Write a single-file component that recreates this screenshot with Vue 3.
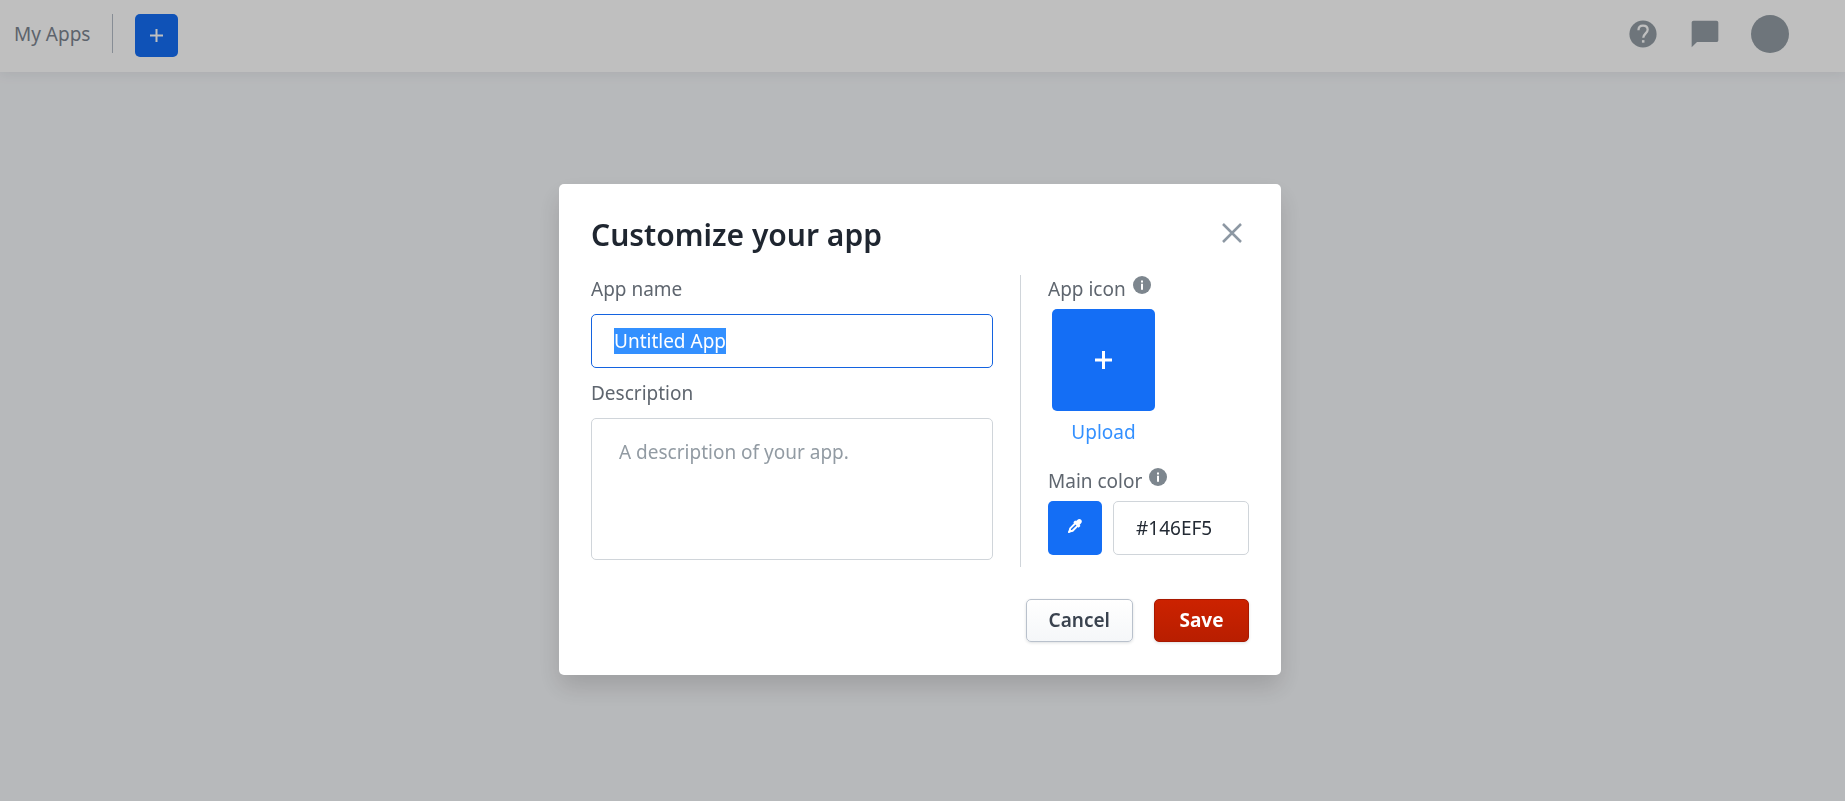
<script setup>
import { nextTick, onMounted, ref } from 'vue'

const appName = ref('Untitled App')
const description = ref('')
const mainColor = ref('#146EF5')
const nameInput = ref(null)

onMounted(async () => {
  await nextTick()
  nameInput.value.focus()
  nameInput.value.select()
})
</script>

<template>
  <div class="page">
    <header class="topbar">
      <a class="home" href="#">My Apps</a>
      <span class="rule"></span>
      <button class="add" type="button" aria-label="New app">
        <svg width="13" height="13" viewBox="0 0 13 13"><path d="M6.5 0v13M0 6.5h13" stroke="#fff" stroke-width="2" /></svg>
      </button>
      <nav class="tools">
        <button class="tool" type="button" aria-label="Help">
          <svg width="32" height="32" viewBox="0 0 24 24"><circle cx="12" cy="12" r="10.2" fill="currentColor" /><path d="M8.6 9.2C8.6 7 10 5.8 12 5.8s3.5 1.2 3.5 3.1c0 2.5-3.3 2.9-3.3 6" fill="none" stroke="#fff" stroke-width="1.7" /><path d="M11.2 16.6h1.9v1.9h-1.9z" fill="#fff" /></svg>
        </button>
        <button class="tool" type="button" aria-label="Messages">
          <svg width="32" height="32" viewBox="0 0 24 24" fill="currentColor"><path d="M20.6 2H3.4C2.6 2 2 2.6 2 3.4V22l4-4h14.6c.8 0 1.4-.6 1.4-1.4V3.4C22 2.6 21.4 2 20.6 2z" /></svg>
        </button>
        <button class="avatar" type="button" aria-label="Account"></button>
      </nav>
    </header>

    <div class="backdrop">
      <form class="dialog" role="dialog" aria-labelledby="dialog-title" @submit.prevent>
        <div class="head">
          <h1 id="dialog-title">Customize your app</h1>
          <button class="close" type="button" aria-label="Close">
            <svg width="20" height="20" viewBox="0 0 20 20"><path d="M1 1l18 18M19 1L1 19" stroke="currentColor" stroke-width="2.5" /></svg>
          </button>
        </div>

        <div class="body">
          <div class="details">
            <label for="app-name">App name</label>
            <input id="app-name" ref="nameInput" v-model="appName" class="field" type="text" />
            <label for="app-description">Description</label>
            <textarea id="app-description" v-model="description" class="field area" placeholder="A description of your app."></textarea>
          </div>

          <div class="look">
            <div class="caption">
              <label for="app-icon">App icon</label>
              <svg class="info" width="18" height="18" viewBox="0 0 18 18"><circle cx="9" cy="9" r="9" fill="#7d868e" /><path d="M8 4.5h2v2H8zM8 7.7h2v6H8z" fill="#fff" /></svg>
            </div>
            <div class="upload">
              <button id="app-icon" class="tile" type="button">
                <svg width="17" height="18" viewBox="0 0 17 18"><path d="M8.5 0v18M0 9h17" stroke="#fff" stroke-width="3" /></svg>
              </button>
              <a class="link" href="#">Upload</a>
            </div>
            <div class="caption">
              <label for="main-color">Main color</label>
              <svg class="info" width="18" height="18" viewBox="0 0 18 18"><circle cx="9" cy="9" r="9" fill="#7d868e" /><path d="M8 4.5h2v2H8zM8 7.7h2v6H8z" fill="#fff" /></svg>
            </div>
            <div class="color">
              <button class="picker" type="button" aria-label="Pick a color">
                <svg width="14" height="14" viewBox="0 0 14 14"><path d="M7.6 4L2.2 9.4l-.7 3.1 3.1-.7L10 6.400" fill="none" stroke="#fff" stroke-width="2" /><path d="M5.300 3.300l1.800-1.800 1 .6L9.300 1c1.200-1.200 2.800-1.200 3.800-.2s1 2.600-.2 3.800l-1.200 1.200.7 1.100-1.800 1.800z" fill="#fff" /><path d="M0 14l.5-2.500 2 2z" fill="#fff" /></svg>
              </button>
              <input id="main-color" v-model="mainColor" class="field hex" type="text" />
            </div>
          </div>
        </div>

        <div class="actions">
          <button class="btn" type="button">Cancel</button>
          <button class="btn primary" type="submit">Save</button>
        </div>
      </form>
    </div>
  </div>
</template>

<style>
body {
  margin: 0;
}
</style>

<style scoped>
.page {
  min-height: 100vh;
  background: #f5f7fa;
  font-family: "Noto Sans", "Open Sans", sans-serif;
  font-size: 19px;
  line-height: 28px;
  color: #5f666f;
}
.page *,
.page *::before {
  box-sizing: border-box;
}
button,
input,
textarea {
  font: inherit;
}
button {
  display: flex;
  align-items: center;
  justify-content: center;
  padding: 0;
  border: 0;
  background: none;
  cursor: pointer;
}
a {
  text-decoration: none;
}

.topbar {
  display: flex;
  align-items: flex-start;
  min-height: 72px;
  padding: 14px 56px 0 14px;
  background: #fff;
  box-shadow: 0 2px 12px rgba(30, 40, 50, 0.08);
}
.home {
  line-height: 40px;
  color: #7d8590;
}
.rule {
  width: 1px;
  height: 39px;
  margin: 0 22px;
  background: #b5bdc7;
}
.add {
  width: 43px;
  height: 43px;
  border-radius: 5px;
  background: #146ef5;
}
.tools {
  display: flex;
  align-items: center;
  gap: 30px;
  height: 40px;
  margin-left: auto;
}
.tool {
  color: #939da5;
}
.avatar {
  width: 38px;
  height: 38px;
  border-radius: 50%;
  background: #939da5;
}

.backdrop {
  position: fixed;
  inset: 0;
  display: flex;
  align-items: flex-start;
  justify-content: center;
  padding: 184px 5px 0 0;
  overflow: auto;
  background: rgba(0, 0, 0, 0.25);
}
.dialog {
  width: 722px;
  padding: 32px 32px 33px;
  border-radius: 5px;
  background: #fff;
  box-shadow: 0 12px 24px rgba(0, 0, 0, 0.14);
}
.head {
  display: flex;
  align-items: flex-start;
  justify-content: space-between;
  padding-right: 7px;
  margin-bottom: 21px;
}
h1 {
  margin: 0;
  font-size: 30px;
  line-height: 38px;
  font-weight: 600;
  color: #1f2630;
}
.close {
  height: 34px;
  color: #8d98a3;
}
.body {
  display: flex;
}
.details {
  display: flex;
  flex: 1;
  flex-direction: column;
  gap: 11px;
  padding: 0 27px 7px 0;
}
.field {
  width: 100%;
  height: 54px;
  padding: 0 22px;
  border: 1px solid #d0d5da;
  border-radius: 5px;
  background: #fff;
  outline: none;
  color: #232a34;
}
.field:focus {
  border-color: #1463e0;
}
.field::selection {
  background: #3390ff;
  color: #fff;
}
.area {
  display: block;
  height: 142px;
  padding: 19px 27px;
  resize: none;
}
.area::placeholder {
  color: #929ba3;
}
.look {
  display: flex;
  flex-direction: column;
  width: 229px;
  gap: 6px;
  padding-left: 27px;
  border-left: 1px solid #d0d5da;
}
.caption {
  display: flex;
  align-items: flex-start;
  gap: 7px;
}
.info {
  margin-top: 1px;
}
.upload {
  display: flex;
  flex-direction: column;
  align-items: center;
  align-self: flex-start;
  gap: 7px;
  margin: 0 4px 15px;
}
.tile {
  width: 103px;
  height: 102px;
  border-radius: 5px;
  background: #146ef5;
}
.link {
  color: #3390ff;
}
.color {
  display: flex;
  gap: 11px;
}
.picker {
  flex: none;
  width: 54px;
  height: 54px;
  padding-bottom: 5px;
  border-radius: 5px;
  background: #146ef5;
}
.hex {
  flex: 1;
  min-width: 0;
}
.actions {
  display: flex;
  justify-content: flex-end;
  gap: 21px;
  margin-top: 32px;
}
.btn {
  height: 43px;
  min-width: 95px;
  padding: 0 22px 1px;
  border: 1px solid #b9c1cc;
  border-radius: 5px;
  background: linear-gradient(#fff, #f5f7f9);
  box-shadow: 0 1px 3px rgba(30, 40, 50, 0.15);
  font-weight: 600;
  color: #3a434f;
}
.primary {
  border-color: #a81800;
  background: linear-gradient(#cc2200, #b81e00);
  font-weight: 700;
  color: #fff;
}
</style>
